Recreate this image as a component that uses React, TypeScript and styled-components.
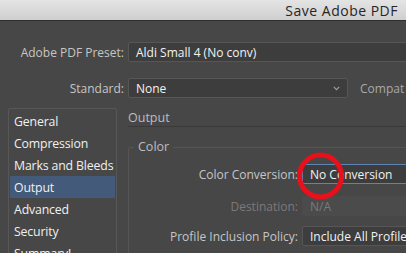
import React from "react";
import styled, { createGlobalStyle } from "styled-components";

const Global = createGlobalStyle`
  html, body { margin: 0; padding: 0; background: #474747; overflow: hidden; }
  * { box-sizing: border-box; }
`;

const Window = styled.div`
  position: relative;
  width: 406px;
  height: 253px;
  overflow: hidden;
  background: #474747;
  font-family: "Open Sans", "Noto Sans", sans-serif;
  font-size: 12px;
  color: #c4c4c4;
`;

const TitleBar = styled.div`
  height: 21px;
  display: flex;
  align-items: center;
  justify-content: flex-end;
  padding-right: 8px;
  background: linear-gradient(#e4e4e4, #cfcfcf);
  border-bottom: 1px solid #2e2e2e;
  font-family: "Open Sans", "Noto Sans", sans-serif;
  font-size: 14px;
  letter-spacing: 0.5px;
  color: #262626;
  white-space: nowrap;
`;

const Body = styled.div`
  padding-top: 21px;
  width: 700px;
`;

const FormRow = styled.div<{ $gapTop?: number }>`
  display: flex;
  align-items: center;
  height: 20px;
  margin-top: ${(p) => p.$gapTop ?? 0}px;
`;

const Label = styled.div<{ $width: number; $dim?: boolean }>`
  width: ${(p) => p.$width}px;
  flex: none;
  text-align: right;
  white-space: nowrap;
  color: ${(p) => (p.$dim ? "#7a7a7a" : "#c6c6c6")};
  margin-right: 4px;
`;

const Field = styled.div<{ $width?: number; $focus?: boolean; $disabled?: boolean }>`
  position: relative;
  display: flex;
  align-items: center;
  height: 20px;
  width: ${(p) => (p.$width ? `${p.$width}px` : "400px")};
  flex: none;
  padding-left: 7px;
  border-radius: 2px;
  background: ${(p) => (p.$disabled ? "#4b4b4b" : "#3d3d3d")};
  border: 1px solid ${(p) => (p.$focus ? "#5f84b4" : p.$disabled ? "#4b4b4b" : "#565656")};
  color: ${(p) => (p.$disabled ? "#7a7a7a" : "#f2f2f2")};
  white-space: nowrap;
`;

const Chevron = styled.svg`
  position: absolute;
  right: 7px;
  top: 7px;
`;

const SideText = styled.span`
  margin-left: 12px;
  color: #a8a8a8;
  white-space: nowrap;
`;

const Main = styled.div`
  display: flex;
  margin-top: 10px;
`;

const Sidebar = styled.div`
  width: 109px;
  margin-left: 8px;
  height: 200px;
  padding: 1px;
  border: 1px solid #575757;
  border-radius: 2px;
  flex: none;
`;

const NavItem = styled.div<{ $active?: boolean }>`
  height: 22px;
  display: flex;
  align-items: center;
  padding-left: 4px;
  color: #f0f0f0;
  font-size: 12.3px;
  letter-spacing: -0.15px;
  white-space: nowrap;
  overflow: hidden;
  background: ${(p) => (p.$active ? "#435a7b" : "transparent")};
`;

const Content = styled.div`
  margin-left: 11px;
  width: 500px;
`;

const SectionHeader = styled.div`
  height: 19px;
  display: flex;
  align-items: center;
  border-bottom: 1px solid #3a3a3a;
  color: #bdbdbd;
  font-size: 12.5px;
`;

const Group = styled.fieldset`
  margin: 13px 0 0 0;
  padding: 10px 0 20px 0;
  border: 1px solid #555555;
  border-radius: 2px;
  min-width: 0;
`;

const Legend = styled.legend`
  margin-left: 5px;
  padding: 0 4px;
  color: #bdbdbd;
  font-size: 12.5px;
  line-height: 14px;
`;

const Circle = styled.svg`
  position: absolute;
  left: 296px;
  top: 152px;
`;

export default function App() {
  const sections = ["General", "Compression", "Marks and Bleeds", "Output", "Advanced", "Security", "Summary!"];
  return (
    <>
      <Global />
      <Window>
        <TitleBar>Save Adobe PDF</TitleBar>
        <Body>
          <FormRow>
            <Label $width={124}>Adobe PDF Preset:</Label>
            <Field>Aldi Small 4 (No conv)</Field>
          </FormRow>
          <FormRow $gapTop={16}>
            <Label $width={124}>Standard:</Label>
            <Field $width={220}>
              None
              <Chevron width="7" height="5" viewBox="0 0 7 5">
                <path d="M0.8 0.8 L3.5 3.6 L6.2 0.8" fill="none" stroke="#a0a0a0" strokeWidth="1.1" />
              </Chevron>
            </Field>
            <SideText>Compat</SideText>
          </FormRow>
          <Main>
            <Sidebar>
              {sections.map((s) => (
                <NavItem key={s} $active={s === "Output"}>
                  {s}
                </NavItem>
              ))}
            </Sidebar>
            <Content>
              <SectionHeader>Output</SectionHeader>
              <Group>
                <Legend>Color</Legend>
                <FormRow>
                  <Label $width={169}>Color Conversion:</Label>
                  <Field $focus>No Conversion</Field>
                </FormRow>
                <FormRow $gapTop={12}>
                  <Label $width={169} $dim>
                    Destination:
                  </Label>
                  <Field $disabled>N/A</Field>
                </FormRow>
                <FormRow $gapTop={10}>
                  <Label $width={169}>Profile Inclusion Policy:</Label>
                  <Field>Include All Profiles</Field>
                </FormRow>
              </Group>
            </Content>
          </Main>
        </Body>
        <Circle width="50" height="50" viewBox="0 0 50 50">
          <circle cx="24.5" cy="24" r="21" fill="none" stroke="#e8101a" strokeWidth="5" />
        </Circle>
      </Window>
    </>
  );
}
